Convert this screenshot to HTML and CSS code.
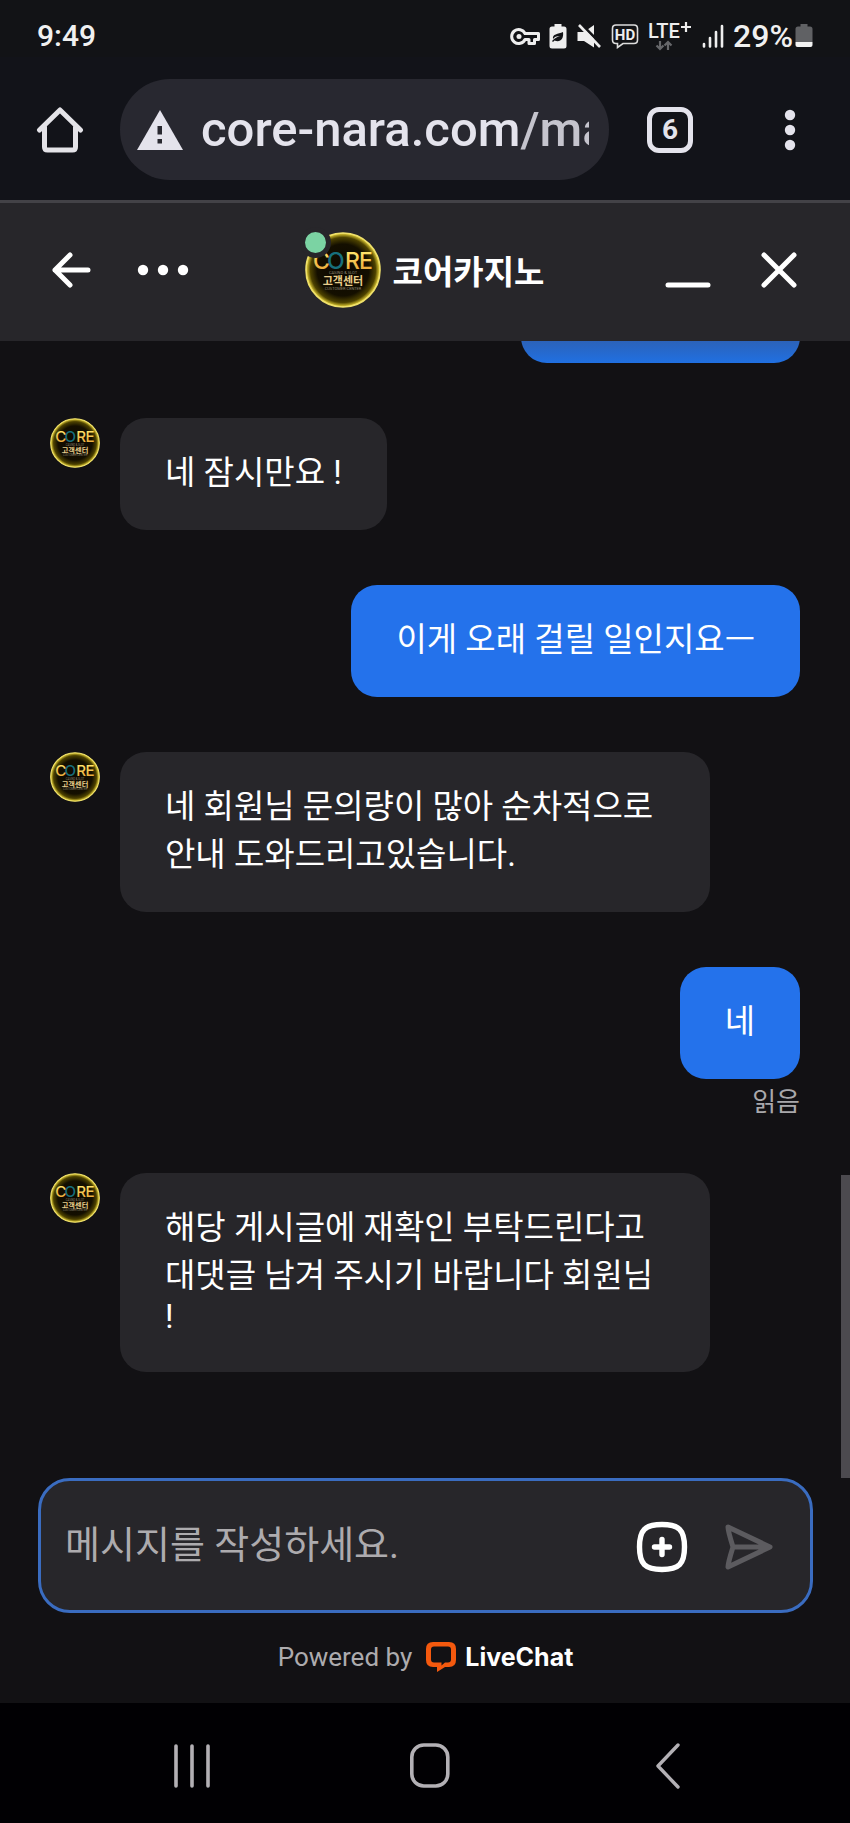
FILE: index.html
```html
<!DOCTYPE html>
<html lang="ko">
<head>
<meta charset="utf-8">
<meta name="viewport" content="width=device-width, initial-scale=1">
<title>코어카지노</title>
<link rel="stylesheet" href="styles.css">
</head>
<body>
<svg class="defs" aria-hidden="true">
  <defs>
    <radialGradient id="glow">
      <stop offset="0" stop-color="#0b0700"/>
      <stop offset="0.7" stop-color="#140f00"/>
      <stop offset="0.88" stop-color="#4d4200"/>
      <stop offset="0.97" stop-color="#c9b62c"/>
      <stop offset="1" stop-color="#fff48a"/>
    </radialGradient>
    <linearGradient id="gold" x1="0" y1="0" x2="0" y2="1">
      <stop offset="0.2" stop-color="#ffe36a"/>
      <stop offset="1" stop-color="#e59a2c"/>
    </linearGradient>
    <symbol id="brand" viewBox="0 0 76 76">
      <circle cx="38" cy="38" r="37" fill="url(#glow)" stroke="#efe06a" stroke-width="1.6"/>
      <text class="brand-core" x="8 40 54" y="37" fill="url(#gold)">CRE</text>
      <text class="brand-core" x="22" y="37" fill="#176f7c">O</text>
      <text class="brand-tiny" x="38" y="42" text-anchor="middle">CASINO &amp; SLOT</text>
      <text class="brand-ko" x="38" y="53" text-anchor="middle">고객센터</text>
      <text class="brand-tiny" x="38" y="58" text-anchor="middle">CUSTOMER CENTER</text>
    </symbol>
  </defs>
</svg>

<div class="phone">
  <header class="status">
    <time class="clock">9:49</time>
    <div class="status-icons">
      <svg width="30" height="26" viewBox="0 0 30 26" fill="none" stroke="#eee" stroke-width="3"><path d="M15 10.5A7 7 0 1 0 15 16.500H19V20.500H24.500V16.500H28.500V10.500Z" stroke-linejoin="round"/><circle cx="9" cy="13.500" r="2.500" fill="#eee" stroke="none"/></svg>
      <svg width="18" height="26" viewBox="0 0 18 26"><path d="M5.500 1H12.500V3.500H15Q17.500 3.500 17.500 6V23Q17.500 25.500 15 25.500H3Q.5 25.500 .5 23V6Q.5 3.500 3 3.500H5.500Z" fill="#eee"/><path d="M14 9C15 16 11 20 5.500 17.500L4 19L3 18C6 15 8 14 11 13C7 13 5.500 14 4 16C3 11 9 11 14 9Z" fill="#121316"/></svg>
      <svg width="26" height="26" viewBox="0 0 26 26"><path d="M1.500 9H8L18 2V24.500L8 18H1.500Z" fill="#eee"/><path d="M4 0L27 23" stroke="#121316" stroke-width="3"/><path d="M3 2L24 24" stroke="#eee" stroke-width="2.600"/></svg>
      <svg width="28" height="26" viewBox="0 0 28 26"><path d="M5 2H23Q26.500 2 26.500 5.500V17Q26.500 20.500 23 20.500H12L6.500 24.500V20.500H5Q1.500 20.500 1.500 17V5.500Q1.500 2 5 2Z" fill="none" stroke="#ddd" stroke-width="1.600"/><text class="hd" x="14" y="17" text-anchor="middle">HD</text></svg>
      <svg class="network" width="44" height="32" viewBox="0 0 44 32"><text class="lte" x="0" y="18">LTE</text><path d="M38 2V12M33 7H43" stroke="#eee" stroke-width="2.200"/><path d="M12 21V29M8.500 25.500L12 29L15.500 25.500M20 30V22M16.500 25.500L20 22L23.500 25.500" stroke="#66676a" stroke-width="2.200" fill="none"/></svg>
      <svg width="24" height="26" viewBox="0 0 24 26" stroke="#eee" stroke-width="2.600" stroke-linecap="round"><path d="M3 21V23.500M9 15V23.500M15 9V23.500M21 3V23.500"/></svg>
    </div>
    <span class="percent">29%</span>
    <svg class="battery" width="18" height="26" viewBox="0 0 18 26"><path d="M5.500 1H12.500V3.500H15Q17.500 3.500 17.500 6V19H.5V6Q.5 3.500 3 3.500H5.500Z" fill="#606164"/><path d="M.5 19H17.500V22Q17.500 24 15.500 24H2.500Q.5 24 .5 22Z" fill="#f2f2f2"/></svg>
  </header>

  <nav class="browser" aria-label="브라우저">
    <button class="icon-btn" aria-label="홈"><svg width="48" height="48" viewBox="0 0 48 48" fill="none" stroke="#e4e3e8" stroke-width="5" stroke-linecap="round" stroke-linejoin="round"><path d="M3.500 24L24 4L44.500 24M8.500 21V41Q8.500 44 11.500 44H36.500Q39.500 44 39.500 41V21"/></svg></button>
    <div class="address">
      <svg width="46" height="40" viewBox="0 0 46 40"><path d="M23 0L46 40H0Z" fill="#e4e3ec"/><path d="M20.500 16H25V24.500H20.500ZM20.500 29H25V33.500H20.500Z" fill="#282830"/></svg>
      <span class="url">core-nara.com<span class="path">/ma</span></span>
    </div>
    <button class="tabs" aria-label="탭">6</button>
    <button class="icon-btn more" aria-label="더보기"><svg width="12" height="42" viewBox="0 0 12 42" fill="#e4e3ec"><circle cx="6" cy="6" r="5.200"/><circle cx="6" cy="21" r="5.200"/><circle cx="6" cy="36" r="5.200"/></svg></button>
  </nav>

  <header class="chat-head">
    <div class="head-left">
      <button class="icon-btn" aria-label="뒤로"><svg width="40" height="38" viewBox="0 0 40 38" fill="none" stroke="#fff" stroke-width="5" stroke-linecap="round" stroke-linejoin="round"><path d="M19 4L4 19L19 34M4 19H37"/></svg></button>
      <button class="icon-btn" aria-label="메뉴"><svg width="52" height="12" viewBox="0 0 52 12" fill="#fff"><circle cx="6" cy="6" r="5.200"/><circle cx="26" cy="6" r="5.200"/><circle cx="46" cy="6" r="5.200"/></svg></button>
    </div>
    <div class="agent">
      <div class="agent-photo"><svg width="76" height="76"><use href="#brand"/></svg><span class="online"></span></div>
      <h1>코어카지노</h1>
    </div>
    <div class="head-right">
      <button class="icon-btn" aria-label="최소화"><svg width="46" height="38" viewBox="0 0 46 38" stroke="#fff" stroke-width="5" stroke-linecap="round"><path d="M3 34H43"/></svg></button>
      <button class="icon-btn" aria-label="닫기"><svg width="38" height="38" viewBox="0 0 38 38" stroke="#fff" stroke-width="5" stroke-linecap="round"><path d="M4 4L34 34M34 4L4 34"/></svg></button>
    </div>
  </header>

  <main class="chat">
    <div class="row mine"><div class="bubble earlier" aria-hidden="true"></div></div>
    <div class="row"><svg class="avatar" width="50" height="50"><use href="#brand"/></svg><p class="bubble">네 잠시만요 !</p></div>
    <div class="row mine"><p class="bubble">이게 오래 걸릴 일인지요ㅡ</p></div>
    <div class="row"><svg class="avatar" width="50" height="50"><use href="#brand"/></svg><p class="bubble">네 회원님 문의량이 많아 순차적으로 안내 도와드리고있습니다.</p></div>
    <div class="row mine"><p class="bubble">네</p><small class="read">읽음</small></div>
    <div class="row"><svg class="avatar" width="50" height="50"><use href="#brand"/></svg><p class="bubble">해당 게시글에 재확인 부탁드린다고 대댓글 남겨 주시기 바랍니다 회원님 !</p></div>
    <div class="thumb"></div>
  </main>

  <footer class="foot">
    <form class="composer">
      <input type="text" aria-label="메시지" placeholder="메시지를 작성하세요.">
      <button type="button" class="icon-btn" aria-label="첨부"><svg width="52" height="52" viewBox="0 0 52 52" fill="none" stroke="#fff" stroke-width="5.400" stroke-linecap="round"><path d="M26 3.500C43 3.500 48.500 9 48.500 26S43 48.500 26 48.500S3.500 43 3.500 26S9 3.500 26 3.500Z"/><path d="M26 18.500V33.500M18.500 26H33.500"/></svg></button>
      <button type="button" class="icon-btn" aria-label="보내기"><svg width="50" height="48" viewBox="0 0 50 48" fill="none" stroke="#5c5b5f" stroke-width="5" stroke-linecap="round" stroke-linejoin="round"><path d="M4 4L46 24L4 44Q4 40 9 24Q4 8 4 4ZM9 24H44"/></svg></button>
    </form>
    <div class="powered">
      <span>Powered by</span>
      <a href="#"><svg width="32" height="32" viewBox="0 0 32 32"><path d="M8 1H24Q31 1 31 8V19Q31 26 24 26H20L12 31V26H8Q1 26 1 19V8Q1 1 8 1ZM9 5.500Q6 5.500 6 8.500V18.500Q6 21.500 9 21.500H16.500V24.500L20 21.500H23Q26 21.500 26 18.500V8.500Q26 5.500 23 5.500Z" fill="#f4590e" fill-rule="evenodd"/></svg>LiveChat</a>
    </div>
  </footer>

  <nav class="system" aria-label="시스템">
    <button class="icon-btn" aria-label="최근 앱"><svg width="40" height="48" viewBox="0 0 40 48" stroke="#b3b0b5" stroke-width="3.600" stroke-linecap="round"><path d="M4 4V44M20 4V44M36 4V44"/></svg></button>
    <button class="icon-btn" aria-label="홈 화면"><svg width="40" height="48" viewBox="0 0 40 48" fill="none" stroke="#b3b0b5" stroke-width="3.600"><rect x="1.800" y="3" width="36" height="41" rx="12"/></svg></button>
    <button class="icon-btn" aria-label="이전"><svg width="40" height="48" viewBox="0 0 40 48" fill="none" stroke="#b3b0b5" stroke-width="3.400" stroke-linecap="round" stroke-linejoin="round"><path d="M30 3L10 24L30 45"/></svg></button>
  </nav>
</div>
</body>
</html>
```

FILE: styles.css
```css
* { box-sizing: border-box; }

body {
  margin: 0;
  background: #121114;
  color: #fff;
  font-family: Roboto, "Noto Sans CJK KR", sans-serif;
}

svg { display: block; flex: none; }
.defs { position: absolute; width: 0; height: 0; }

button {
  padding: 0;
  border: 0;
  background: none;
  color: inherit;
  font: inherit;
}

.phone {
  display: flex;
  flex-direction: column;
  height: 100vh;
}

/* Status bar */
.status {
  display: flex;
  align-items: center;
  padding: 14px 37px 0;
  height: 57px;
  background: #121316;
  color: #f0f0f0;
  flex: none;
}
.clock { font-size: 30px; font-weight: 500; margin-right: auto; }
.status-icons { display: flex; align-items: center; gap: 9px; margin-right: 8px; }
.percent { font-size: 32px; font-weight: 500; }
.battery { margin-left: 2px; }
.network { overflow: visible; }
.hd { font: 700 15px Roboto, sans-serif; fill: #eee; }
.lte { font: 500 20px Roboto, sans-serif; fill: #eee; }

/* Browser bar */
.browser {
  display: flex;
  align-items: center;
  padding: 22px 54px 20px 36px;
  background: #121319;
  border-bottom: 3px solid #434247;
  flex: none;
}
.address {
  display: flex;
  align-items: center;
  flex: 1;
  gap: 18px;
  height: 101px;
  margin: 0 38px 0 36px;
  padding: 0 20px 0 17px;
  border-radius: 50px;
  background: #282830;
  min-width: 0;
}
.url {
  flex: 1;
  overflow: hidden;
  white-space: nowrap;
  color: #e4e3ec;
  font-size: 49px;
  font-weight: 500;
}
.path { color: #c5c4cd; }
.tabs {
  width: 46px;
  height: 46px;
  margin-right: 91px;
  border: 5px solid #e4e3ec;
  border-radius: 12px;
  color: #e4e3ec;
  font-size: 28px;
  font-weight: 700;
  line-height: 36px;
}

/* Chat header */
.chat-head {
  display: grid;
  grid-template-columns: 1fr auto 1fr;
  align-items: center;
  height: 138px;
  padding: 0 52px 4px 51px;
  background: #27262a;
  flex: none;
}
.head-left { display: flex; align-items: center; gap: 46px; }
.head-right { display: flex; align-items: center; justify-content: flex-end; gap: 49px; }
.agent { display: flex; align-items: center; gap: 12px; }
.agent-photo { position: relative; }
.online {
  position: absolute;
  top: -5px;
  left: -5px;
  width: 31px;
  height: 31px;
  border: 5px solid #27262a;
  border-radius: 50%;
  background: #7bd3a3;
}
h1 { margin: 0; font-size: 33px; font-weight: 700; }

.brand-core { font: 500 23px Inter, sans-serif; }
.brand-ko { font: 700 11px "Noto Sans CJK KR", sans-serif; fill: #e9cf8c; }
.brand-tiny { font: 400 4px Roboto, sans-serif; fill: #8d8672; }

/* Messages */
.chat {
  position: relative;
  display: flex;
  flex: 1;
  flex-direction: column;
  justify-content: flex-end;
  gap: 55px;
  min-height: 0;
  overflow: hidden;
  padding: 0 50px 106px;
}
.row { display: flex; align-items: flex-start; gap: 20px; flex: none; }
.mine { flex-direction: column; align-items: flex-end; gap: 0; }
.bubble {
  max-width: 590px;
  margin: 0;
  padding: 28px 45px 36px;
  border-radius: 26px;
  background: #27262a;
  font-size: 33px;
}
.mine .bubble { background: #2472eb; }
.mine .earlier { width: 279px; height: 112px; background: linear-gradient(#2c62b8 80%, #2070e2); }
.read { padding-top: 7px; color: #a9a8ab; font-size: 26px; line-height: 32px; }
.thumb {
  position: absolute;
  right: 0;
  bottom: 0;
  width: 9px;
  height: 303px;
  background: #4c4a4f;
}

/* Composer */
.foot { padding: 0 37px 24px 38px; flex: none; }
.composer {
  display: flex;
  align-items: center;
  gap: 36px;
  height: 135px;
  padding: 2px 36px 0 24px;
  border: 3px solid #3a6cc0;
  border-radius: 32px;
  background: #27262a;
}
.composer input {
  flex: 1;
  min-width: 0;
  height: 64px;
  padding: 0 0 4px;
  border: 0;
  outline: 0;
  background: none;
  color: #fff;
  font: inherit;
  font-size: 38px;
}
.composer input::placeholder { color: #adabae; opacity: 1; }
.powered {
  display: flex;
  align-items: center;
  justify-content: center;
  gap: 13px;
  padding-top: 24px;
  padding-bottom: 2px;
  color: #adabae;
  font-size: 26px;
  line-height: 40px;
}
.powered a {
  display: flex;
  align-items: center;
  gap: 8px;
  color: #fff;
  font-family: Inter, sans-serif;
  font-size: 25px;
  font-weight: 700;
  text-decoration: none;
}

/* System navigation */
.system {
  display: flex;
  align-items: center;
  justify-content: space-between;
  height: 120px;
  padding: 6px 162px 0 172px;
  background: #010003;
  flex: none;
}
```
